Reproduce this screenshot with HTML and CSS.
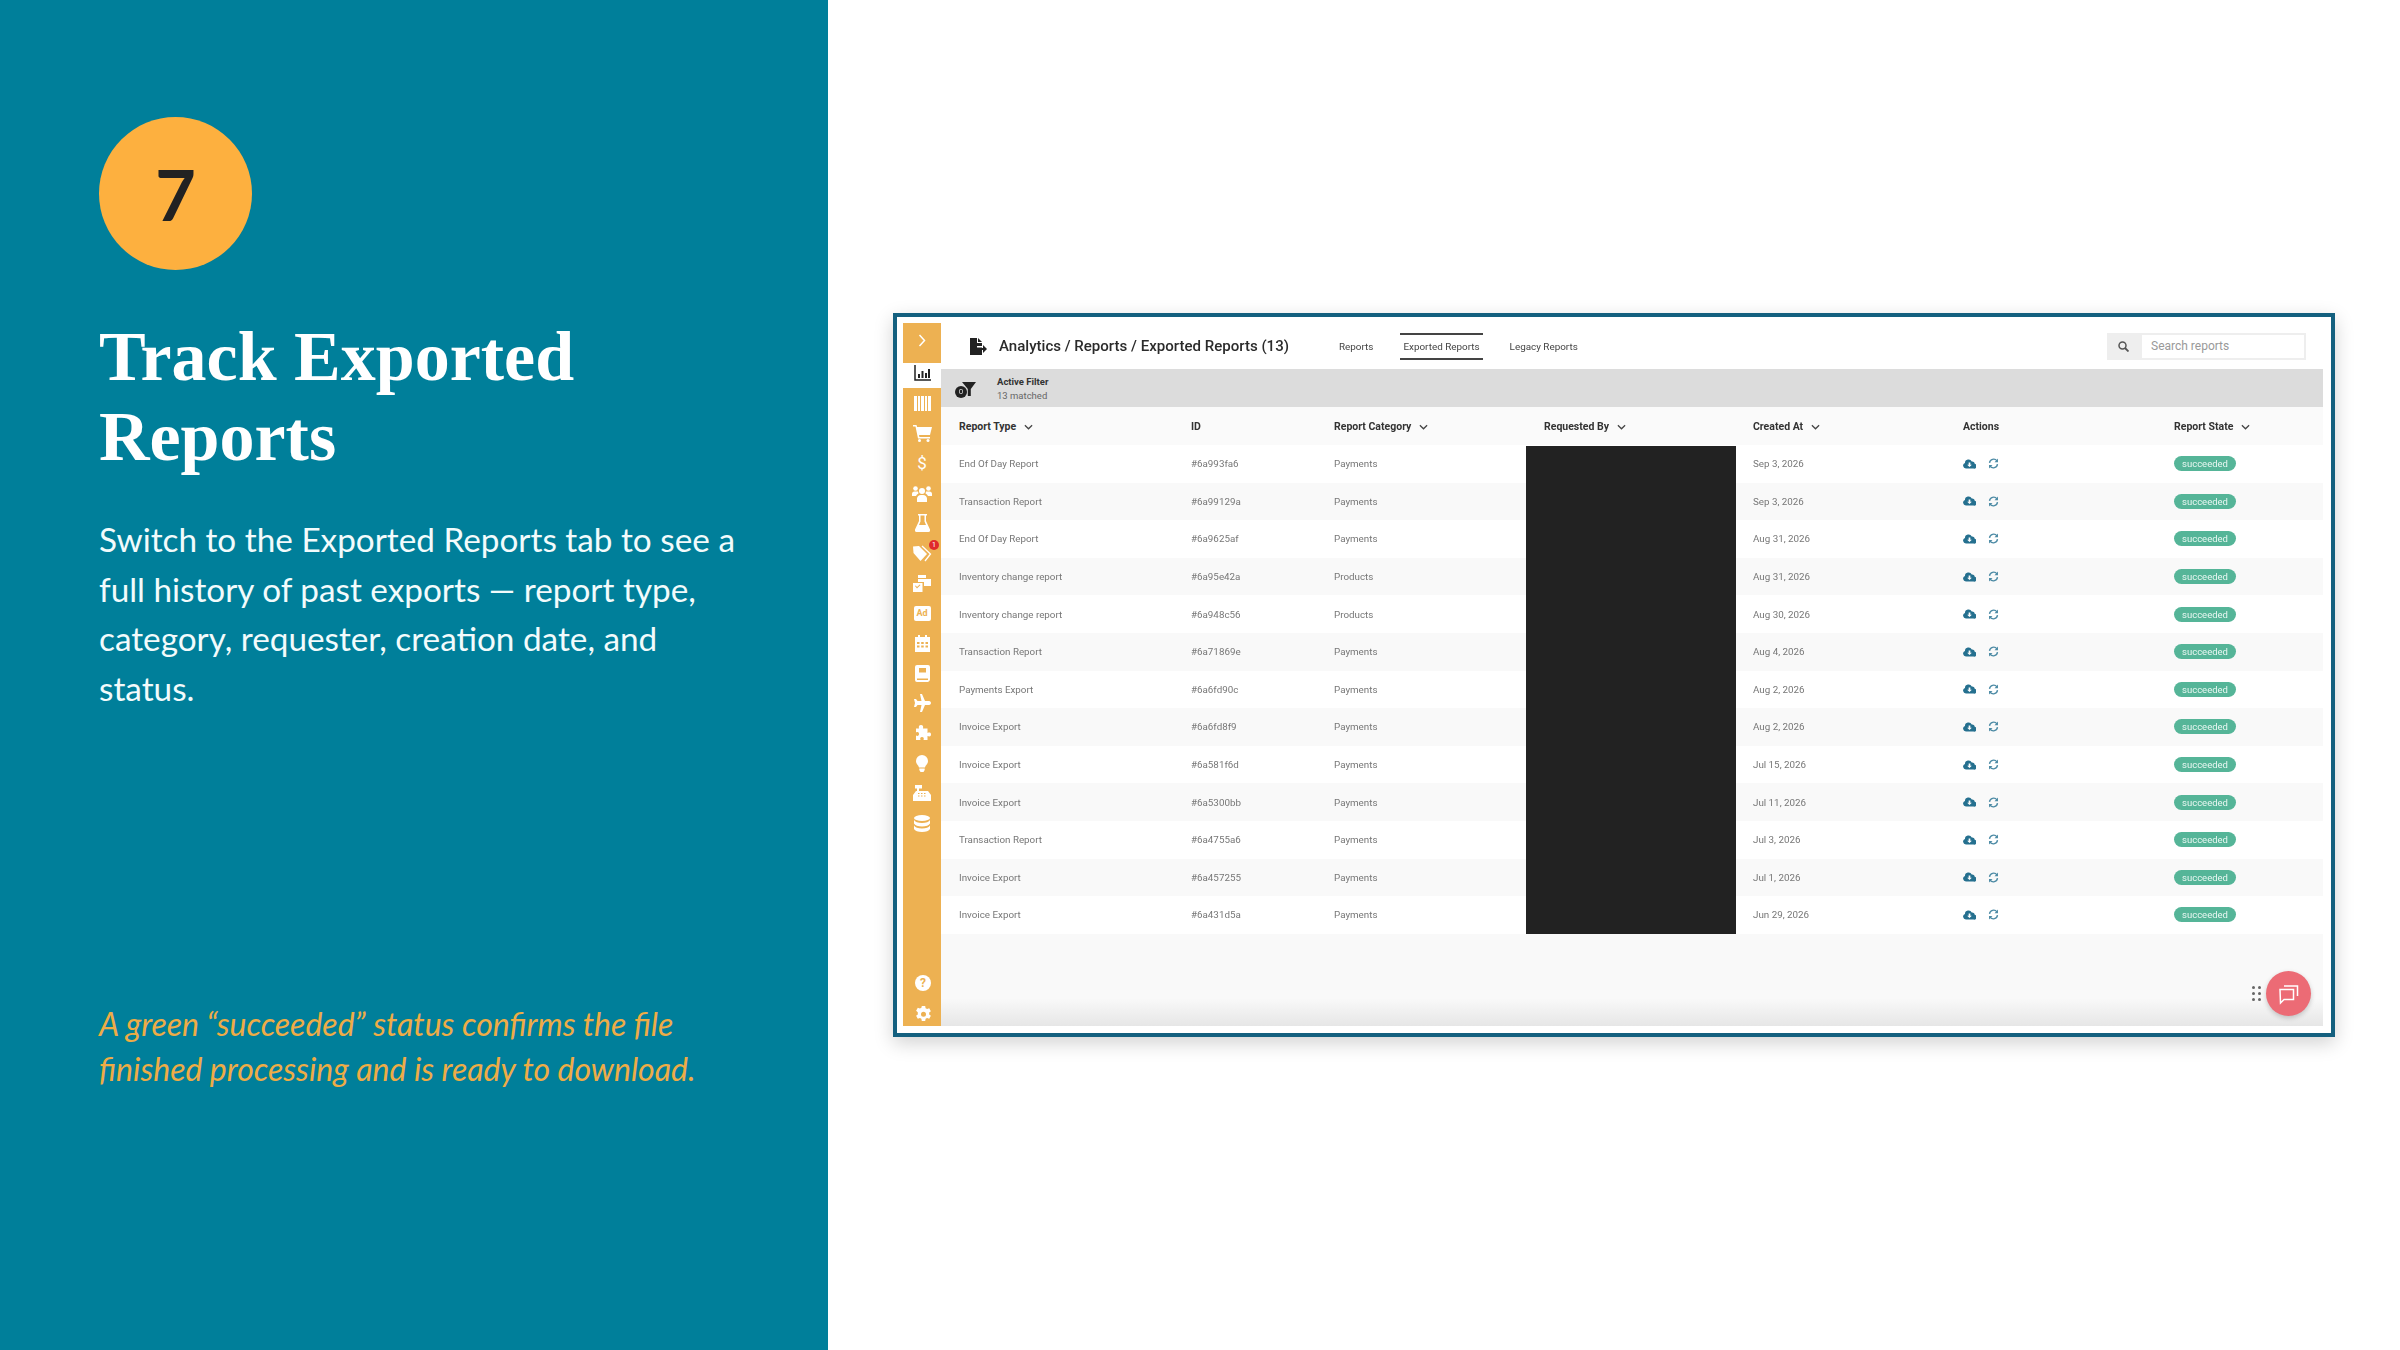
FILE: index.html
```html
<!DOCTYPE html>
<html lang="en">
<head>
  <meta charset="UTF-8" />
  <title>Track Exported Reports</title>
  <link rel="stylesheet" href="styles.css">
</head>
<body>

  <svg class="sprites" width="0" height="0">
    <symbol id="i-cloud" viewBox="0 0 20 14"><path fill-rule="evenodd" d="M4.5 14A4.5 4.5 0 0 1 3 5.3 5.5 5.5 0 0 1 13.5 3.2 3.6 3.6 0 0 1 18 6.6 3.8 3.8 0 0 1 16 14ZM8.7 4.5V8H6.4L10 11.6 13.6 8H11.3V4.5Z"/></symbol>
    <symbol id="i-sync" viewBox="0 0 16 16"><path fill="none" stroke="currentColor" stroke-width="2" d="M2.2 7A6 6 0 0 1 13 4.2M13.8 9A6 6 0 0 1 3 11.8"/><path d="M14.5 .8V6H9.5ZM1.5 15.2V10H6.5Z"/></symbol>
    <symbol id="i-chevron" viewBox="0 0 10 6"><path fill="none" stroke="currentColor" stroke-width="1.4" d="M1 1l4 4 4-4"/></symbol>
  </svg>

  <div class="slide">
    <section class="intro">
      <div class="step">7</div>
      <h1>Track Exported Reports</h1>
      <p class="lead">Switch to the Exported Reports tab to see a full history of past exports — report type, category, requester, creation date, and status.</p>
      <p class="note">A green “succeeded” status confirms the file finished processing and is ready to download.</p>
    </section>

    <section class="stage">
      <div class="shot">
        <div class="shot-inner">

          <!-- sidebar -->
          <nav class="sidebar">
            <div class="nav-toggle">
              <svg width="8" height="13" viewBox="0 0 8 13"><path fill="none" stroke="#fff" stroke-width="1.5" d="M1.5 1l5 5.500-5 5.500"/></svg>
            </div>
            <div class="nav-item active">
              <svg width="17" height="16" viewBox="0 0 17 16"><path fill="none" stroke="#222" stroke-width="1.500" d="M1 0v15h16"/><path fill="#222" d="M4 9h2v4H4zM7.500 6h2v7h-2zM11 8h2v5h-2zM14 4h2v9h-2z"/></svg>
            </div>
            <div class="nav-item">
              <svg width="17" height="15" viewBox="0 0 17 15"><path fill="#fff" d="M0 0h3v15H0zM4 0h2v15H4zM7 0h3v15H7zM11 0h2v15h-2zM14 0h3v15h-3z"/></svg>
            </div>
            <div class="nav-item">
              <svg width="19" height="17" viewBox="0 0 19 17"><path fill="#fff" d="M0 0h3.500l.6 2H19l-2 8H6l.4 2H17v1.500H5L2.500 1.500H0z"/><circle cx="6.500" cy="15.500" r="1.500" fill="#fff"/><circle cx="15" cy="15.500" r="1.500" fill="#fff"/></svg>
            </div>
            <div class="nav-item nav-dollar">$</div>
            <div class="nav-item">
              <svg width="20" height="17" viewBox="0 0 20 17"><g fill="#fff"><circle cx="10" cy="6" r="3"/><circle cx="3.500" cy="3.500" r="2.300"/><circle cx="16.500" cy="3.500" r="2.300"/><path d="M5 17v-3.500A4 4 0 0 1 9 10h2a4 4 0 0 1 4 3.500V17ZM0 11V9a2.500 2.500 0 0 1 2.500-2.500H6l.5 2A5 5 0 0 0 4 11ZM20 11V9a2.500 2.500 0 0 0-2.500-2.500H14l-.5 2A5 5 0 0 1 16 11Z"/></g></svg>
            </div>
            <div class="nav-item">
              <svg width="15" height="18" viewBox="0 0 15 18"><path fill="#fff" d="M3 0h9v1.500h-1V7l4 8.500a1.700 1.700 0 0 1-1.500 2.500h-12A1.700 1.700 0 0 1 0 15.500L4 7V1.500H3zM5.500 1.500v6L4 11h7L9.500 7.500v-6z"/></svg>
            </div>
            <div class="nav-item">
              <svg width="19" height="17" viewBox="0 0 19 17"><path fill="#fff" d="M0 1.500 6 1l8 8-6.500 7L.5 8z"/><path fill="none" stroke="#fff" stroke-width="1.300" d="M9 1l8.500 8-5.500 7"/></svg>
              <span class="nav-badge">1</span>
            </div>
            <div class="nav-item">
              <svg width="18" height="17" viewBox="0 0 18 17"><path fill="#fff" d="M5 0h8v3H5zM5 4h13v7h-7V7H5zM0 8h9.500v9H0zM2 11l2 2.500 3.500-3.500-.8-.6-2.700 2.600L2.800 10.500z"/></svg>
            </div>
            <div class="nav-item">
              <div class="nav-ad">Ad</div>
            </div>
            <div class="nav-item">
              <svg width="15" height="17" viewBox="0 0 15 17"><path fill="#fff" d="M3 0h2v2h5V0h2v2h3v15H0V2h3zM2 7v2h2.500V7zM6.200 7v2h2.500V7zM10.500 7v2H13V7zM2 10.500v2h2.500v-2zM6.200 10.500v2h2.500v-2zM10.500 10.500v2H13v-2z"/></svg>
            </div>
            <div class="nav-item">
              <svg width="15" height="17" viewBox="0 0 15 17"><path fill="#fff" d="M2 0h11a2 2 0 0 1 2 2v12a3 3 0 0 1-2 3H2a2 2 0 0 1-2-2V2a2 2 0 0 1 2-2zM4 3v4.500h7V3zM2 13.500V15h11v-1.500z"/></svg>
            </div>
            <div class="nav-item">
              <svg width="18" height="18" viewBox="0 0 18 18"><path fill="#fff" d="M7 0h2l3 7h4c1.500 0 2 1.500 2 2s-.5 2-2 2h-4l-3 7H7l1.500-7H4.500L3 13H1l1-4-1-4h2l1.500 2h4z"/></svg>
            </div>
            <div class="nav-item">
              <svg width="17" height="17" viewBox="0 0 17 17"><path fill="#fff" d="M7 0c2 0 2.500 1.500 2 3.500h4.500V8C15.500 7 17 7.500 17 9.500S15.500 12 13.500 11V15H9.500c.8-2 0-3-1.500-3s-2.300 1-1.500 3H2V10.500C4 11.500 5 10.500 5 9S4 6.500 2 7.500V3.500h3C4.500 1.500 5 0 7 0z"/></svg>
            </div>
            <div class="nav-item">
              <svg width="12" height="17" viewBox="0 0 12 17"><path fill="#fff" d="M6 0a6 6 0 0 1 6 6c0 3-2.500 4-3 6.500H3C2.500 10 0 9 0 6a6 6 0 0 1 6-6zM3.300 13.500h5.400V15L7.500 17h-3L3.300 15z"/></svg>
            </div>
            <div class="nav-item">
              <svg width="20" height="16" viewBox="0 0 20 16"><path fill="#fff" d="M3 0h7v3.500H7V6h9l3 4v6H1v-6l3-4h1V3.500H3z"/><path fill="#edb152" d="M6 8h1.500v1H6zM9 8h1.500v1H9zM12 8h1.500v1H12zM6 10.500h1.500v1H6zM9 10.500h1.500v1H9zM12 10.500h1.500v1H12z"/></svg>
            </div>
            <div class="nav-item">
              <svg width="16" height="17" viewBox="0 0 16 17"><g fill="#fff"><ellipse cx="8" cy="3" rx="8" ry="3"/><path d="M0 5c1 2 4 3 8 3s7-1 8-3v3.500c-1 2-4 3-8 3s-7-1-8-3zM0 10.500c1 2 4 3 8 3s7-1 8-3V14c-1 2-4 3-8 3s-7-1-8-3z"/></g></svg>
            </div>
            <div class="nav-foot">
              <div class="nav-item"><div class="nav-help">?</div></div>
              <div class="nav-item">
                <svg width="17" height="17" viewBox="0 0 17 17"><path fill="#fff" fill-rule="evenodd" d="M6.800 0h3.400l.4 2.200 1.500.8 2.100-.8 1.700 3-1.700 1.400v1.800l1.700 1.400-1.700 3-2.100-.8-1.500.8-.4 2.200H6.800l-.4-2.200-1.500-.8-2.100.8-1.700-3 1.700-1.400V6.200L1.100 4.800l1.700-3 2.100.8 1.500-.8zM8.500 5.700a2.500 2.500 0 1 0 0 5 2.500 2.500 0 0 0 0-5z" transform="translate(0 1)"/></svg>
              </div>
            </div>
          </nav>

          <!-- main area -->
          <div class="main">
            <header class="topbar">
              <svg class="doc-icon" width="18" height="17" viewBox="0 0 18 17"><path fill="#222" d="M0 0h7v5h5v3H7v1.500h5V17H0zM8 0l4 4H8zM13 7l4 4-4 4v-3H8v-2h5z"/></svg>
              <div class="crumbs">Analytics / Reports / Exported Reports (13)</div>
              <div class="tabs">
                <a class="tab">Reports</a>
                <a class="tab current">Exported Reports</a>
                <a class="tab">Legacy Reports</a>
              </div>
              <div class="search">
                <div class="search-icon">
                  <svg width="11" height="11" viewBox="0 0 11 11"><circle cx="4.500" cy="4.500" r="3.500" fill="none" stroke="#555" stroke-width="1.500"/><path stroke="#555" stroke-width="1.800" d="M7 7l3.500 3.500"/></svg>
                </div>
                <div class="search-input">Search reports</div>
              </div>
            </header>

            <div class="filter">
              <div class="filter-icon">
                <svg width="14" height="14" viewBox="0 0 14 14"><path fill="#222" d="M0 0h14L8.800 7v7H5.800V7z"/></svg>
                <span class="filter-count">0</span>
              </div>
              <div class="filter-text">
                <strong>Active Filter</strong>
                <span>13 matched</span>
              </div>
            </div>

            <div class="table">
              <div class="row head">
                <div>Report Type <svg class="chev"><use href="#i-chevron"/></svg></div>
                <div>ID</div>
                <div>Report Category <svg class="chev"><use href="#i-chevron"/></svg></div>
                <div>Requested By <svg class="chev"><use href="#i-chevron"/></svg></div>
                <div>Created At <svg class="chev"><use href="#i-chevron"/></svg></div>
                <div>Actions</div>
                <div>Report State <svg class="chev"><use href="#i-chevron"/></svg></div>
              </div>

              <div class="row"><div>End Of Day Report</div><div>#6a993fa6</div><div>Payments</div><div></div><div>Sep 3, 2026</div><div class="actions"><svg class="cloud"><use href="#i-cloud"/></svg><svg class="sync"><use href="#i-sync"/></svg></div><div><span class="pill">succeeded</span></div></div>
              <div class="row"><div>Transaction Report</div><div>#6a99129a</div><div>Payments</div><div></div><div>Sep 3, 2026</div><div class="actions"><svg class="cloud"><use href="#i-cloud"/></svg><svg class="sync"><use href="#i-sync"/></svg></div><div><span class="pill">succeeded</span></div></div>
              <div class="row"><div>End Of Day Report</div><div>#6a9625af</div><div>Payments</div><div></div><div>Aug 31, 2026</div><div class="actions"><svg class="cloud"><use href="#i-cloud"/></svg><svg class="sync"><use href="#i-sync"/></svg></div><div><span class="pill">succeeded</span></div></div>
              <div class="row"><div>Inventory change report</div><div>#6a95e42a</div><div>Products</div><div></div><div>Aug 31, 2026</div><div class="actions"><svg class="cloud"><use href="#i-cloud"/></svg><svg class="sync"><use href="#i-sync"/></svg></div><div><span class="pill">succeeded</span></div></div>
              <div class="row"><div>Inventory change report</div><div>#6a948c56</div><div>Products</div><div></div><div>Aug 30, 2026</div><div class="actions"><svg class="cloud"><use href="#i-cloud"/></svg><svg class="sync"><use href="#i-sync"/></svg></div><div><span class="pill">succeeded</span></div></div>
              <div class="row"><div>Transaction Report</div><div>#6a71869e</div><div>Payments</div><div></div><div>Aug 4, 2026</div><div class="actions"><svg class="cloud"><use href="#i-cloud"/></svg><svg class="sync"><use href="#i-sync"/></svg></div><div><span class="pill">succeeded</span></div></div>
              <div class="row"><div>Payments Export</div><div>#6a6fd90c</div><div>Payments</div><div></div><div>Aug 2, 2026</div><div class="actions"><svg class="cloud"><use href="#i-cloud"/></svg><svg class="sync"><use href="#i-sync"/></svg></div><div><span class="pill">succeeded</span></div></div>
              <div class="row"><div>Invoice Export</div><div>#6a6fd8f9</div><div>Payments</div><div></div><div>Aug 2, 2026</div><div class="actions"><svg class="cloud"><use href="#i-cloud"/></svg><svg class="sync"><use href="#i-sync"/></svg></div><div><span class="pill">succeeded</span></div></div>
              <div class="row"><div>Invoice Export</div><div>#6a581f6d</div><div>Payments</div><div></div><div>Jul 15, 2026</div><div class="actions"><svg class="cloud"><use href="#i-cloud"/></svg><svg class="sync"><use href="#i-sync"/></svg></div><div><span class="pill">succeeded</span></div></div>
              <div class="row"><div>Invoice Export</div><div>#6a5300bb</div><div>Payments</div><div></div><div>Jul 11, 2026</div><div class="actions"><svg class="cloud"><use href="#i-cloud"/></svg><svg class="sync"><use href="#i-sync"/></svg></div><div><span class="pill">succeeded</span></div></div>
              <div class="row"><div>Transaction Report</div><div>#6a4755a6</div><div>Payments</div><div></div><div>Jul 3, 2026</div><div class="actions"><svg class="cloud"><use href="#i-cloud"/></svg><svg class="sync"><use href="#i-sync"/></svg></div><div><span class="pill">succeeded</span></div></div>
              <div class="row"><div>Invoice Export</div><div>#6a457255</div><div>Payments</div><div></div><div>Jul 1, 2026</div><div class="actions"><svg class="cloud"><use href="#i-cloud"/></svg><svg class="sync"><use href="#i-sync"/></svg></div><div><span class="pill">succeeded</span></div></div>
              <div class="row"><div>Invoice Export</div><div>#6a431d5a</div><div>Payments</div><div></div><div>Jun 29, 2026</div><div class="actions"><svg class="cloud"><use href="#i-cloud"/></svg><svg class="sync"><use href="#i-sync"/></svg></div><div><span class="pill">succeeded</span></div></div>

              <div class="redacted"></div>
            </div>

            <div class="table-foot">
              <div class="grip"><i></i><i></i><i></i><i></i><i></i><i></i></div>
              <div class="chat-fab">
                <svg width="22" height="22" viewBox="0 0 22 22"><path fill="none" stroke="#fff" stroke-width="1.500" d="M2 6.500h13.500v10H6l-3.500 3.500z M6 3h13.500v10"/></svg>
              </div>
            </div>
          </div>

        </div>
      </div>
    </section>
  </div>

</body>
</html>
```

FILE: styles.css
```css
* {
  box-sizing: border-box;
}

body {
  margin: 0;
  background: #ffffff;
  font-family: Lato, sans-serif;
}

.sprites {
  position: absolute;
}

.slide {
  display: flex;
  width: 2400px;
  height: 1350px;
  overflow: hidden;
}

/* left panel */
.intro {
  width: 828px;
  flex-shrink: 0;
  padding: 117px 60px 0 99px;
  background-color: #007f9a;
}

.step {
  display: flex;
  align-items: center;
  justify-content: center;
  width: 153px;
  height: 153px;
  border-radius: 50%;
  background-color: #fdb03f;
  color: #222222;
  font-size: 70px;
  font-weight: 700;
}

h1 {
  margin: 47px 0 0;
  width: 560px;
  color: #ffffff;
  font-family: "Liberation Serif", serif;
  font-size: 70px;
  font-weight: 700;
  line-height: 80px;
}

.lead {
  margin: 38px 0 0;
  width: 645px;
  color: #f2fbfc;
  font-size: 33.300px;
  line-height: 49.600px;
}

.note {
  margin: 288px 0 0;
  color: #eeac46;
  font-size: 32px;
  font-style: italic;
  line-height: 45px;
}

/* right side, the screenshot is centred in it */
.stage {
  flex: 1;
  display: flex;
  align-items: center;
  justify-content: center;
}

.shot {
  width: 1442px;
  height: 724px;
  padding: 6px 8px 7px 6px;
  background: #ffffff;
  border: 4px solid #14607f;
  box-shadow: 0 6px 18px rgba(0, 0, 0, 0.18);
}

.shot-inner {
  display: flex;
  height: 100%;
  font-family: Roboto, sans-serif;
  filter: blur(0.7px);
}

/* sidebar */
.sidebar {
  width: 38px;
  flex-shrink: 0;
  display: flex;
  flex-direction: column;
  background-color: #edb152;
}

.nav-toggle {
  display: flex;
  align-items: center;
  justify-content: center;
  height: 35px;
  margin-bottom: 5px;
}

.nav-item {
  position: relative;
  display: flex;
  align-items: center;
  justify-content: center;
  height: 30px;
  flex-shrink: 0;
}

.nav-item.active {
  height: 25px;
  padding-bottom: 5px;
  background-color: #ffffff;
}

.nav-dollar {
  color: #ffffff;
  font-size: 17px;
}

.nav-badge {
  position: absolute;
  top: 2px;
  right: 2px;
  width: 10px;
  height: 10px;
  border-radius: 50%;
  background-color: #e02b2b;
  color: #ffffff;
  font-size: 7px;
  line-height: 10px;
  text-align: center;
}

.nav-ad {
  width: 17px;
  height: 15px;
  border-radius: 2px;
  background-color: #ffffff;
  color: #edb152;
  font-size: 9px;
  font-weight: 700;
  line-height: 15px;
  text-align: center;
}

.nav-help {
  width: 16px;
  height: 16px;
  border-radius: 50%;
  background-color: #ffffff;
  color: #edb152;
  font-size: 12px;
  font-weight: 700;
  line-height: 16px;
  text-align: center;
}

.nav-foot {
  margin-top: auto;
  margin-bottom: -2px;
  padding-left: 2px;
}

/* main */
.main {
  position: relative;
  flex: 1;
  display: flex;
  flex-direction: column;
  min-width: 0;
}

.topbar {
  display: flex;
  align-items: center;
  height: 46px;
  padding: 0 17px 0 29px;
  flex-shrink: 0;
}

.doc-icon {
  margin-right: 11px;
}

.crumbs {
  color: #2b2b2b;
  font-size: 15.050px;
  font-weight: 500;
  white-space: nowrap;
}

.tabs {
  display: flex;
  align-items: center;
  margin-left: 47px;
  gap: 24px;
}

.tab {
  padding: 6px 3px;
  color: #444444;
  font-size: 9.900px;
  border-top: 2px solid transparent;
  border-bottom: 2px solid transparent;
}

.tab.current {
  border-color: #444444;
}

.search {
  display: flex;
  height: 27px;
  margin-left: auto;
  background-color: #eeeeee;
}

.search-icon {
  display: flex;
  align-items: center;
  justify-content: center;
  width: 33px;
}

.search-input {
  width: 166px;
  padding-left: 9px;
  border: 2px solid #eeeeee;
  background-color: #ffffff;
  color: #999999;
  font-size: 12px;
  line-height: 23px;
}

.filter {
  display: flex;
  align-items: center;
  height: 38px;
  flex-shrink: 0;
  padding-left: 14px;
  background-color: #dcdcdc;
}

.filter-icon {
  position: relative;
  width: 21px;
  height: 14px;
  margin-right: 21px;
  padding-left: 7px;
}

.filter-count {
  position: absolute;
  left: 0;
  top: 5px;
  width: 12px;
  height: 12px;
  border-radius: 50%;
  background-color: #222222;
  color: #dcdcdc;
  font-size: 8px;
  line-height: 12px;
  text-align: center;
}

.filter-text {
  display: flex;
  flex-direction: column;
  gap: 3px;
  font-size: 9.500px;
  color: #666666;
}

.filter-text strong {
  color: #333333;
  font-weight: 700;
}

/* table */
.table {
  position: relative;
  flex-shrink: 0;
}

.row {
  display: grid;
  grid-template-columns: 232px 143px 210px 209px 210px 211px 1fr;
  align-items: center;
  height: 37.600px;
  padding-left: 18px;
  color: #777777;
  font-size: 9.800px;
  white-space: nowrap;
}

.row:nth-child(odd) {
  background-color: #f9f9f9;
}

.row.head {
  height: 38px;
  background-color: #fafafa;
  color: #333333;
  font-size: 10.500px;
  font-weight: 700;
}

.chev {
  width: 9px;
  height: 6px;
  margin-left: 5px;
  color: #444444;
}

.actions {
  display: flex;
  align-items: center;
  gap: 12px;
}

.cloud {
  width: 13px;
  height: 10px;
  fill: #25708f;
}

.sync {
  width: 11px;
  height: 11px;
  fill: #4d8ba5;
  color: #4d8ba5;
}

.pill {
  display: inline-block;
  width: 62px;
  height: 15px;
  border-radius: 8px;
  background-color: #55b598;
  color: #e9f7f2;
  font-size: 9.500px;
  line-height: 15px;
  text-align: center;
}

.redacted {
  position: absolute;
  top: 39px;
  bottom: 0;
  left: 585px;
  width: 210px;
  background-color: #222222;
}

.table-foot {
  flex: 1;
  display: flex;
  align-items: center;
  justify-content: flex-end;
  gap: 5px;
  padding: 28px 12px 0 0;
  background: linear-gradient(to bottom, #f9f9f9 70%, #e6e6e6 100%);
}

.grip {
  display: grid;
  grid-template-columns: 3px 3px;
  gap: 3px;
}

.grip i {
  width: 3px;
  height: 3px;
  border-radius: 50%;
  background-color: #666666;
}

.chat-fab {
  display: flex;
  align-items: center;
  justify-content: center;
  width: 45px;
  height: 45px;
  border-radius: 50%;
  background-color: #ec6b75;
  box-shadow: 0 2px 5px rgba(0, 0, 0, 0.2);
}
```
